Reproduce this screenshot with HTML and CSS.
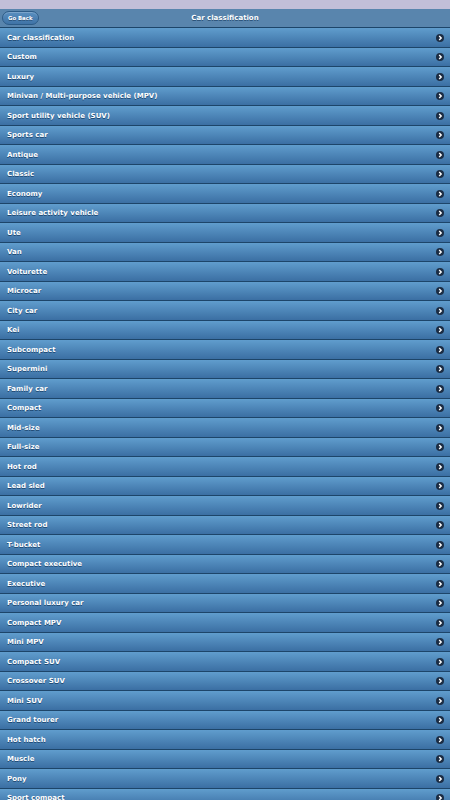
FILE: index.html
```html
<!DOCTYPE html>
<html lang="en">
<head>
    <meta charset="UTF-8">
    <meta name="viewport" content="width=device-width, initial-scale=1.0">
    <title>Car classification</title>
    <link rel="stylesheet" href="styles.css">
</head>
<body>
    <div class="status-bar"></div>
    <div class="header">
        <div class="header-left">
            <button class="back-btn">Go Back</button>
        </div>
        <h1>Car classification</h1>
        <div></div>
    </div>
    <ul class="list">
        <li>Car classification</li>
        <li>Custom</li>
        <li>Luxury</li>
        <li>Minivan / Multi-purpose vehicle (MPV)</li>
        <li>Sport utility vehicle (SUV)</li>
        <li>Sports car</li>
        <li>Antique</li>
        <li>Classic</li>
        <li>Economy</li>
        <li>Leisure activity vehicle</li>
        <li>Ute</li>
        <li>Van</li>
        <li>Voiturette</li>
        <li>Microcar</li>
        <li>City car</li>
        <li>Kei</li>
        <li>Subcompact</li>
        <li>Supermini</li>
        <li>Family car</li>
        <li>Compact</li>
        <li>Mid-size</li>
        <li>Full-size</li>
        <li>Hot rod</li>
        <li>Lead sled</li>
        <li>Lowrider</li>
        <li>Street rod</li>
        <li>T-bucket</li>
        <li>Compact executive</li>
        <li>Executive</li>
        <li>Personal luxury car</li>
        <li>Compact MPV</li>
        <li>Mini MPV</li>
        <li>Compact SUV</li>
        <li>Crossover SUV</li>
        <li>Mini SUV</li>
        <li>Grand tourer</li>
        <li>Hot hatch</li>
        <li>Muscle</li>
        <li>Pony</li>
        <li>Sport compact</li>
    </ul>
</body>
</html>
```

FILE: styles.css
```css
body {
    margin: 0;
    font-family: "DejaVu Sans", Verdana, sans-serif;
    font-weight: bold;
    color: white;
    background-color: #3d71a4;
    overflow: hidden;
}
.status-bar {
    height: 9px;
    background-color: #c2bfd8;
}
.header {
    height: 18px;
    display: grid;
    grid-template-columns: 1fr auto 1fr;
    align-items: center;
    background-color: #5985ad;
}
.header-left {
    padding-left: 2px;
    display: flex;
    align-items: center;
}
.header h1 {
    margin: 0;
    font-size: 7px;
    text-shadow: 0 1px 0 #2a5178;
}
.back-btn {
    height: 14px;
    padding: 0 5px;
    font-family: inherit;
    font-weight: bold;
    font-size: 5.4px;
    color: white;
    text-shadow: 0 1px 0 #2a5178;
    border: 1px solid #2d5c88;
    border-radius: 8px;
    background: linear-gradient(#5a8fc0, #3f73a6);
    box-shadow: inset 0 1px 0 rgba(255,255,255,0.2);
}
.list {
    list-style: none;
    margin: 0;
    padding: 0;
}
.list li {
    height: 17.5px;
    padding-top: 1px;
    border-top: 1px solid #1d4569;
    padding-left: 7px;
    padding-right: 6px;
    display: flex;
    align-items: center;
    justify-content: space-between;
    font-size: 7px;
    text-shadow: 0 1px 0 #1f4a74;
    background: linear-gradient(#609dcd, #3b6fa3);
}
.list li::after {
    content: "";
    width: 8px;
    height: 8px;
    border-radius: 50%;
    background-color: #1b2c43;
    background-image: url("data:image/svg+xml,%3Csvg xmlns='http://www.w3.org/2000/svg' viewBox='0 0 8 8'%3E%3Cpath d='M3.2 2l2 2-2 2' fill='none' stroke='white' stroke-width='1.4'/%3E%3C/svg%3E");
}
```
